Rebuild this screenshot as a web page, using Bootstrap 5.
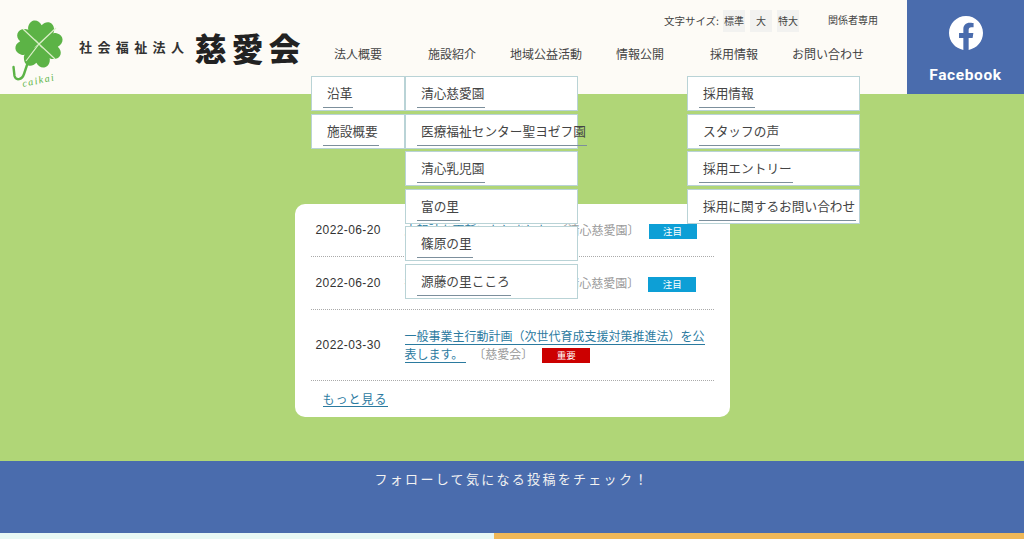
<!DOCTYPE html>
<html lang="ja">
<head>
    <meta charset="UTF-8">
    <meta name="viewport" content="width=device-width, initial-scale=1.0">
    <title>社会福祉法人 慈愛会</title>
    <link href="https://cdn.jsdelivr.net/npm/bootstrap@5.3.0/dist/css/bootstrap.min.css" rel="stylesheet">
    <style>
        body { font-family: "Noto Sans CJK JP", "Noto Sans", sans-serif; background: #b0d677; color: #444; overflow: hidden; text-spacing-trim: space-all; }
        a { text-decoration: none; color: inherit; }

        .site-head { height: 94px; background: #fdfbf6; }
        .logo-area { width: 311px; padding-left: 10px; }
        .logo-img { display: block; margin-top: 14px; flex: none; }
        .corp-type { font-size: 13px; font-weight: 700; letter-spacing: 5.400px; color: #333; margin-left: 13px; white-space: nowrap; }
        .corp-name { font-size: 32px; font-weight: 900; letter-spacing: 5px; color: #222; margin-left: 5px; white-space: nowrap; line-height: 1; }

        .head-right { width: 596px; }
        .top-tools { height: 32px; padding: 9px 29px 0 0; font-size: 10px; color: #444; }
        .size-label { margin-right: 4px; font-size: 10.5px; }
        .size-btn { width: 22px; height: 22px; background: #f2f2f0; margin-right: 5px; font-size: 10px; }
        .related-link { margin-left: 24px; margin-top: -3px; }

        .menu-col { width: 94px; height: 44px; position: relative; font-size: 12px; }
        .menu-title { line-height: 44px; text-align: center; white-space: nowrap; }
        .sub-menu { position: absolute; top: 44px; left: 0; width: 94px; z-index: 10; }
        .sub-wide { width: 173px; }
        .sub-item { height: 35px; margin-bottom: 2.500px; background: #fff; border: 1px solid #b9d3d6; padding: 0 0 0 11px; font-size: 12.700px; white-space: nowrap; }
        .sub-item a { display: inline-block; height: 31px; line-height: 32px; padding: 0 1px 0 4px; border-bottom: 1px solid #7c8f9c; }

        .fb-block { width: 117px; height: 94px; background: #4a6cad; color: #fff; }
        .fb-name { font-family: Roboto, "Liberation Sans", sans-serif; font-weight: 700; font-size: 15.500px; letter-spacing: .6px; line-height: 1; margin-top: 18px; }

        .green-area { height: 367px; padding-top: 110px; }
        .news-box { width: 435px; height: 213px; background: #fff; border-radius: 10px; padding: 0 16px; }
        .news-row { border-bottom: 1px dotted #aaa; }
        .row-short { height: 53px; }
        .row-tall { height: 71px; }
        .news-date { width: 94px; flex: none; padding-left: 5px; font-family: "Liberation Sans", sans-serif; font-size: 12px; letter-spacing: .4px; color: #333; }
        .news-body { font-size: 12px; line-height: 18px; letter-spacing: 0; }
        .news-link { color: #2b7a9f; border-bottom: 1px solid #2b7a9f; padding-right: 3px; }
        .news-cat { color: #999; margin-left: 7px; }
        .cat-tight { margin-left: 4px; }
        .tag-label { display: inline-block; width: 48px; height: 15px; margin-left: 9px; color: #fff; font-size: 9.500px; line-height: 15px; text-align: center; vertical-align: 0; }
        .tag-notice { background: #0d9fd6; }
        .tag-important { background: #cc0000; }
        .more-link { display: inline-block; margin: 10px 0 0 12px; font-size: 12px; line-height: 15px; letter-spacing: 1px; color: #2b7a9f; border-bottom: 1px solid #2b7a9f; }

        .follow-band { height: 72px; background: #4a6cad; color: #f2f2f2; font-size: 13px; letter-spacing: 2.300px; padding-top: 8px; }
        .foot-strip { height: 6px; }
        .strip-left { width: 494px; background: #e8f8f5; }
        .strip-right { background: #f0b858; }
    </style>
</head>
<body>

    <header class="site-head d-flex">
        <div class="logo-area d-flex align-items-center">
            <svg class="logo-img" width="56" height="70" viewBox="0 0 56 70">
                <!-- clover: one heart repeated four times -->
                <g transform="translate(29 25) rotate(8)" fill="#5cb346">
                    <path id="leaf" d="M0 0C-3-5-14-8-13-16C-12-24-4-25 0-19C4-25 12-24 13-16C14-8 3-5 0 0Z"/>
                    <use href="#leaf" transform="rotate(90)"/>
                    <use href="#leaf" transform="rotate(180)"/>
                    <use href="#leaf" transform="rotate(270)"/>
                </g>
                <path d="M13 10L45 40M16 42L29 25L46 9" fill="none" stroke="#dcefc9" stroke-width="1.200"/>
                <path d="M17 46L14 55C12 61 6 62 4.500 57L3.500 48" fill="none" stroke="#5cb346" stroke-width="2.400" stroke-linecap="round"/>
                <text x="13" y="68" transform="rotate(-12 13 68)" font-family="'Liberation Serif', serif" font-style="italic" font-size="10" letter-spacing="1.500" fill="#5cb346">caikai</text>
            </svg>
            <span class="corp-type">社会福祉法人</span>
            <span class="corp-name">慈愛会</span>
        </div>

        <div class="head-right">
            <div class="top-tools d-flex justify-content-end align-items-center">
                <span class="size-label">文字サイズ:</span>
                <a href="#" class="size-btn d-flex align-items-center justify-content-center">標準</a>
                <a href="#" class="size-btn d-flex align-items-center justify-content-center">大</a>
                <a href="#" class="size-btn d-flex align-items-center justify-content-center">特大</a>
                <a href="#" class="related-link">関係者専用</a>
            </div>
            <ul class="d-flex list-unstyled m-0">
                <li class="menu-col">
                    <div class="menu-title">法人概要</div>
                    <ul class="sub-menu list-unstyled m-0">
                        <li class="sub-item"><a href="#">沿革</a></li>
                        <li class="sub-item"><a href="#">施設概要</a></li>
                    </ul>
                </li>
                <li class="menu-col">
                    <div class="menu-title">施設紹介</div>
                    <ul class="sub-menu sub-wide list-unstyled m-0">
                        <li class="sub-item"><a href="#">清心慈愛園</a></li>
                        <li class="sub-item"><a href="#">医療福祉センター聖ヨゼフ園</a></li>
                        <li class="sub-item"><a href="#">清心乳児園</a></li>
                        <li class="sub-item"><a href="#">富の里</a></li>
                        <li class="sub-item"><a href="#">篠原の里</a></li>
                        <li class="sub-item"><a href="#">源藤の里こころ</a></li>
                    </ul>
                </li>
                <li class="menu-col"><div class="menu-title">地域公益活動</div></li>
                <li class="menu-col"><div class="menu-title">情報公開</div></li>
                <li class="menu-col">
                    <div class="menu-title">採用情報</div>
                    <ul class="sub-menu sub-wide list-unstyled m-0">
                        <li class="sub-item"><a href="#">採用情報</a></li>
                        <li class="sub-item"><a href="#">スタッフの声</a></li>
                        <li class="sub-item"><a href="#">採用エントリー</a></li>
                        <li class="sub-item"><a href="#">採用に関するお問い合わせ</a></li>
                    </ul>
                </li>
                <li class="menu-col"><div class="menu-title">お問い合わせ</div></li>
            </ul>
        </div>

        <a href="#" class="fb-block d-flex flex-column align-items-center pt-3">
            <svg width="34" height="34" viewBox="0 0 24 24" fill="#fff">
                <path d="M24 12.073c0-6.627-5.373-12-12-12s-12 5.373-12 12c0 5.990 4.388 10.954 10.125 11.854v-8.385H7.078v-3.470h3.047V9.430c0-3.007 1.792-4.669 4.533-4.669 1.312 0 2.686.235 2.686.235v2.953H15.830c-1.491 0-1.956.925-1.956 1.874v2.250h3.328l-.532 3.470h-2.796v8.385C19.612 23.027 24 18.062 24 12.073z"/>
            </svg>
            <span class="fb-name">Facebook</span>
        </a>
    </header>

    <main class="green-area">
        <section class="news-box mx-auto">
            <div class="news-row row-short d-flex align-items-center">
                <div class="news-date">2022-06-20</div>
                <div class="news-body"><a href="#" class="news-link">広報誌を更新いたしました</a><span class="news-cat cat-tight">〔清心慈愛園〕</span><span class="tag-label tag-notice">注目</span></div>
            </div>
            <div class="news-row row-short d-flex align-items-center">
                <div class="news-date">2022-06-20</div>
                <div class="news-body"><a href="#" class="news-link">行事予定を更新しています</a><span class="news-cat cat-tight">〔清心慈愛園〕</span><span class="tag-label tag-notice">注目</span></div>
            </div>
            <div class="news-row row-tall d-flex align-items-center">
                <div class="news-date">2022-03-30</div>
                <div class="news-body"><a href="#" class="news-link">一般事業主行動計画（次世代育成支援対策推進法）を公表します。</a><span class="news-cat">〔慈愛会〕</span><span class="tag-label tag-important">重要</span></div>
            </div>
            <a href="#" class="more-link">もっと見る</a>
        </section>
    </main>

    <section class="follow-band text-center">フォローして気になる投稿をチェック！</section>

    <div class="foot-strip d-flex">
        <div class="strip-left"></div>
        <div class="strip-right flex-grow-1"></div>
    </div>

    <script src="https://cdn.jsdelivr.net/npm/bootstrap@5.3.0/dist/js/bootstrap.bundle.min.js"></script>
</body>
</html>
